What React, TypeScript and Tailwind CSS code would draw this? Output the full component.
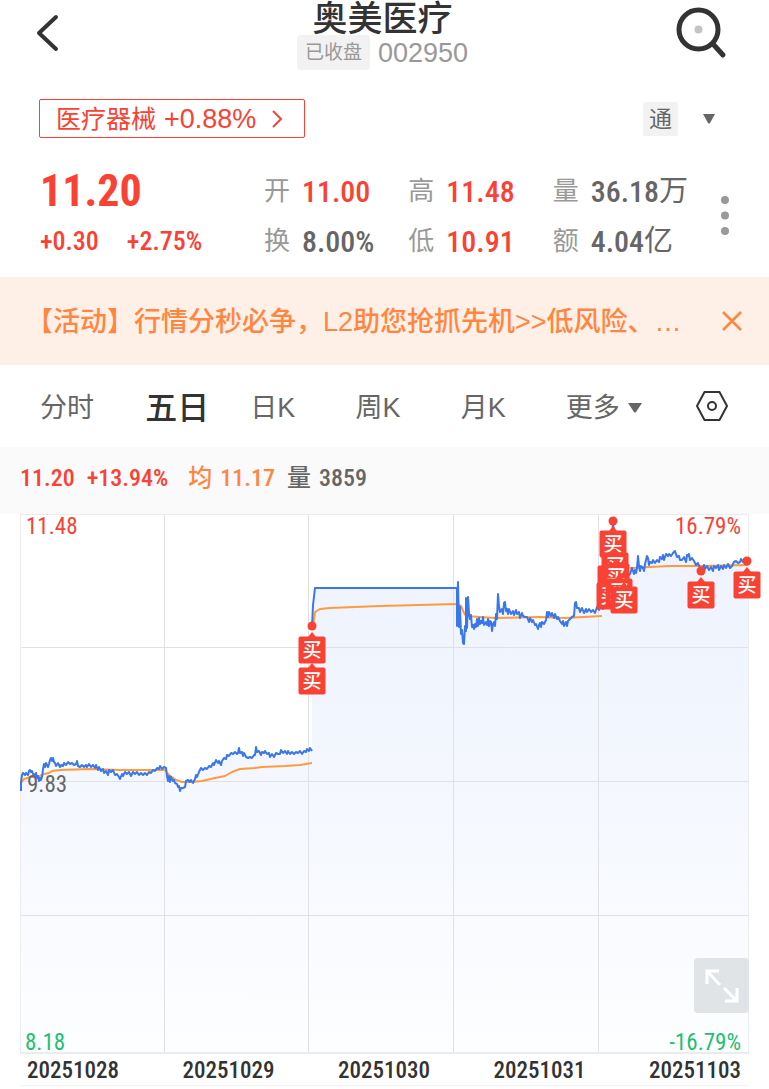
import { useState } from 'react'

const RED = '#f94234'

const quotes = [
  { label: '开', value: '11.00', up: true },
  { label: '高', value: '11.48', up: true },
  { label: '量', value: '36.18', unit: '万' },
  { label: '换', value: '8.00%' },
  { label: '低', value: '10.91', up: true },
  { label: '额', value: '4.04', unit: '亿' },
]

const tabs = ['分时', '五日', '日K', '周K', '月K']

const dates = ['20251028', '20251029', '20251030', '20251031', '20251103']

// price line, split where the session gaps
const priceLeft =
  '21,791 21,782 22,775 23,773 25,775 26,773 28,775 29,771 30,770 31,772 32,771 33,774 35,775 36,773 37,778 38,776 39,781 40,778 41,780 42,777 43,769 44,764 45,767 46,763 47,765 48,767 49,764 50,760 51,758 52,761 53,758 54,762 55,763 56,766 58,763 60,767 61,765 63,766 64,763 66,765 68,762 70,764 72,763 74,765 76,764 77,761 78,766 80,767 82,765 84,767 86,765 87,767 89,764 91,767 93,765 95,768 96,765 98,770 99,767 101,771 103,769 104,773 106,771 108,775 109,770 111,772 113,770 115,775 117,774 119,777 120,779 122,774 123,776 125,772 127,774 129,772 131,776 133,772 135,774 137,772 139,775 141,773 143,775 145,773 147,775 149,772 151,773 153,770 155,771 157,768 159,769 160,766 162,769 164,767 166,768 167,776 168,781 169,776 170,782 171,777 173,781 174,780 175,783 177,784 178,787 179,786 180,791 181,788 183,788 185,787 186,781 188,780 190,782 191,780 193,783 195,779 196,775 197,777 199,772 201,768 203,770 205,768 207,769 209,766 211,767 213,763 214,765 216,760 218,763 219,761 221,765 222,761 224,758 226,759 227,755 229,756 231,753 233,754 235,752 237,754 238,753 239,748 240,753 242,752 243,756 244,753 246,757 248,758 250,757 252,758 254,755 255,755 256,747 257,752 259,751 261,755 262,752 264,753 265,751 267,754 269,753 270,757 272,754 274,757 276,753 278,754 280,754 281,750 283,753 285,751 287,754 288,751 290,754 292,752 294,754 296,752 298,753 300,751 302,754 304,751 306,752 307,749 309,751 310,748 312,751'
const priceRight =
  '312,626 313,605 315,588 457,588 457,626 458,582 459,627 460,607 461,634 462,630 463,643 464,644 465,626 466,631 466,598 467,628 468,597 469,613 470,619 471,615 472,627 473,625 474,629 475,624 476,627 477,619 478,626 479,618 480,624 481,621 482,623 483,617 484,625 486,622 487,625 488,619 489,626 490,621 491,622 492,631 493,624 494,622 495,626 496,614 497,619 498,594 499,606 500,612 502,609 503,614 504,603 505,602 506,611 507,609 508,614 509,609 511,614 513,611 514,615 516,610 517,614 519,612 520,618 522,613 523,616 525,617 527,617 529,622 530,618 532,622 533,620 535,625 536,624 538,629 539,625 540,623 541,627 542,622 544,624 546,620 547,612 548,617 549,612 551,616 552,613 554,618 555,614 557,619 558,617 560,621 562,624 563,621 564,626 566,622 567,626 568,621 570,619 572,617 574,616 575,603 576,602 577,608 579,608 580,612 582,608 584,613 586,609 587,612 589,609 591,612 593,610 595,613 597,607 599,610 601,606 603,609 604,600 611,560 613,521 616,560 624,582 630,574 632,568 634,574 635,570 636,573 637,568 638,556 639,566 640,571 641,566 643,568 644,571 645,564 647,556 648,558 649,565 650,562 652,563 653,560 655,563 657,560 659,562 660,557 662,559 663,555 664,560 666,554 668,556 669,554 671,556 673,553 675,551 676,554 677,557 679,556 680,560 682,560 684,557 686,562 687,555 688,556 689,554 690,560 692,558 694,561 696,565 698,563 700,568 702,569 704,565 705,569 707,566 709,570 711,567 713,571 714,566 716,568 718,565 719,570 721,566 723,569 724,565 726,568 728,564 730,568 732,566 734,562 736,561 738,563 740,562 741,559 743,562 744,559 746,562 748,561'

const avgLeft =
  '21,783 24,779 30,777 38,777 44,774 49,773 52,771 60,770 90,769 120,770 165,770 169,775 176,780 182,782 192,782 202,781 215,778 225,776 232,772 240,769 255,768 262,767 285,766 300,765 312,763'
const avgRight = '313,626 315,612 320,609 330,608 380,606 457,604 461,606 464,613 466,616 480,617 495,618 540,617 565,618 602,616'
const avgLast = '630,568 670,566 700,566 748,565'

// later entries are painted over earlier ones
const buys = [
  { x: 613, y: 544 },
  { x: 615, y: 566 },
  { x: 611, y: 579, blank: true },
  { x: 616, y: 577 },
  { x: 610, y: 596 },
  { x: 619, y: 592 },
  { x: 624, y: 600 },
  { x: 312, y: 650 },
  { x: 312, y: 681 },
  { x: 701, y: 595 },
  { x: 747, y: 585 },
]

function Chart() {
  return (
    <svg viewBox="0 514 769 541" className="block w-full overflow-visible" role="img" aria-label="五日">
      <defs>
        <linearGradient id="area" x1="0" y1="550" x2="0" y2="1053" gradientUnits="userSpaceOnUse">
          <stop offset="0" stopColor="#eef3fe" />
          <stop offset="0.45" stopColor="#f4f7fe" />
          <stop offset="1" stopColor="#fdfeff" />
        </linearGradient>
      </defs>
      <polygon points={`${priceLeft} 312,1053 21,1053`} fill="url(#area)" />
      <polygon points={`${priceRight} 748,1053 312,1053`} fill="url(#area)" />

      <g stroke="#dfe1e6" strokeWidth="1">
        <path d="M20 647.5H748M20 781.5H748M20 915.5H748" />
        <path d="M164.5 514V1053M308.5 514V1053M453.5 514V1053M598.5 514V1053" />
        <path d="M20.5 514V1053M748.5 514V1053M20 514.5H748" stroke="#ececef" />
        <path d="M20 1053H749" stroke="#ececec" strokeWidth="2" />
      </g>

      <g fill="none" strokeWidth="2" strokeLinejoin="round">
        <g stroke="#ff9a3d">
          <polyline points={avgLeft} />
          <polyline points={avgRight} />
          <polyline points={avgLast} />
        </g>
        <g stroke="#3a76ec">
          <polyline points={priceLeft} />
          <polyline points={priceRight} />
        </g>
      </g>

      <g fontFamily="'Roboto Condensed', Roboto, sans-serif" fontSize="23" fontWeight="400">
        <text x="26" y="534" fill={RED}>11.48</text>
        <text x="741" y="534" fill={RED} textAnchor="end">16.79%</text>
        <text x="27" y="792" fill="#666">9.83</text>
        <text x="25" y="1050" fill="#1fbf73">8.18</text>
        <text x="741" y="1050" fill="#1fbf73" textAnchor="end">-16.79%</text>
      </g>

      <g fill={RED}>
        <circle cx="312" cy="626" r="4.5" />
        <circle cx="613" cy="521" r="4.5" />
        <circle cx="701" cy="571" r="4.5" />
        <circle cx="747" cy="561" r="4.5" />
      </g>
      {buys.map(({ x, y, blank }) => (
        <g key={`${x}-${y}`}>
          <path d={`M${x - 4} ${y - 13}L${x} ${y - 18}L${x + 4} ${y - 13}Z`} fill={RED} />
          <rect x={x - 13.5} y={y - 13.5} width="27" height="27" rx="2" fill={RED} />
          {!blank && (
            <text
              x={x}
              y={y + 7}
              fill="#fff"
              fontSize="19"
              fontWeight="500"
              textAnchor="middle"
              fontFamily="'Noto Sans CJK SC', sans-serif"
            >
              买
            </text>
          )}
        </g>
      ))}
    </svg>
  )
}

export default function App() {
  const [tab, setTab] = useState('五日')
  const [showNotice, setShowNotice] = useState(true)

  return (
    <div className="min-h-screen bg-white font-['Liberation_Sans','Noto_Sans_CJK_SC',sans-serif] text-[#666]">
      <header className="flex items-start justify-between pl-9 pr-10">
        <button aria-label="返回" className="mt-3">
          <svg width="56" height="42" viewBox="0 0 56 42" fill="none" stroke="#333" strokeWidth="4" strokeLinecap="round" strokeLinejoin="round">
            <path d="M20 5L3 21L20 37" />
          </svg>
        </button>
        <div className="flex flex-col items-center pt-[2px]">
          <h1 className="text-[35px] leading-[33px] font-medium text-[#333]">奥美医疗</h1>
          <div className="flex items-center gap-2">
            <span className="flex h-[35px] items-center rounded bg-[#f2f2f2] px-2 pt-[2px] text-[19px] text-[#999]">已收盘</span>
            <span className="pt-[2px] text-[27px] leading-[33px] text-[#999]">002950</span>
          </div>
        </div>
        <button aria-label="搜索" className="mt-[6px]">
          <svg width="56" height="54" viewBox="0 0 56 54" fill="none">
            <circle cx="25.500" cy="23.500" r="19.500" stroke="#333" strokeWidth="5" />
            <path d="M40 38L50 49" stroke="#333" strokeWidth="5" strokeLinecap="round" />
            <circle cx="25.500" cy="23.500" r="4" fill="#c4c4c4" />
          </svg>
        </button>
      </header>

      <div className="mt-[29px] flex items-center justify-between pl-[39px] pr-[53px]">
        <a href="#sector" className="flex h-[39px] items-center gap-2 rounded-xs border border-current px-4 text-[#f94234]">
          <span className="pt-[2px] text-[25px]">医疗器械</span>
          <span className="pt-[2px] text-[27px]">+0.88%</span>
          <svg width="24" height="20" viewBox="0 0 24 20" fill="none" stroke="currentColor" strokeWidth="2">
            <path d="M9 2L17 10L9 18" />
          </svg>
        </a>
        <button className="flex items-center gap-6" aria-label="通">
          <span className="flex h-[34px] w-[35px] items-center justify-center rounded-xs bg-[#f2f2f2] pt-[2px] text-[23px]">通</span>
          <svg width="14" height="10" viewBox="0 0 14 10" fill="#666">
            <path d="M1 0H13L8 9Q7 10 6 9Z" />
          </svg>
        </button>
      </div>

      <section className="flex items-center pt-7 pb-[11px] pl-10 pr-9">
        <div className="w-[224px] font-['Roboto_Condensed',Roboto,sans-serif] text-[#f94234]">
          <div className="text-[44px] leading-[50px] font-bold">11.20</div>
          <div className="flex gap-7 text-[26px] leading-[50px] font-medium">
            <span>+0.30</span>
            <span>+2.75%</span>
          </div>
        </div>
        <dl className="grid flex-1 grid-cols-3">
          {quotes.map((q) => (
            <div key={q.label} className="flex h-[50px] items-center gap-3 whitespace-nowrap">
              <dt className="text-[26px] leading-[50px] text-[#999]">{q.label}</dt>
              <dd className={q.up ? 'flex items-center text-[#f94234]' : 'flex items-center text-[#666]'}>
                <span className="font-['Roboto_Condensed',Roboto,sans-serif] text-[30px] font-medium">{q.value}</span>
                {q.unit && <span className="pt-[2px] text-[29px]">{q.unit}</span>}
              </dd>
            </div>
          ))}
        </dl>
        <button aria-label="更多行情" className="ml-5">
          <svg width="16" height="40" viewBox="0 0 16 40" fill="#999">
            <circle cx="8" cy="4" r="4" />
            <circle cx="8" cy="19.500" r="4" />
            <circle cx="8" cy="35" r="4" />
          </svg>
        </button>
      </section>

      {showNotice && (
        <div className="flex h-[88px] items-center justify-between gap-6 bg-[#fff0e7] px-[26px] text-[#ff8640]">
          <p className="truncate pt-[2px] text-[27px] font-medium">【活动】行情分秒必争，L2助您抢抓先机&gt;&gt;低风险、…</p>
          <button aria-label="关闭" onClick={() => setShowNotice(false)}>
            <svg width="22" height="22" viewBox="0 0 22 22" fill="none" stroke="currentColor" strokeWidth="2.500">
              <path d="M2 2L20 20M20 2L2 20" />
            </svg>
          </button>
        </div>
      )}

      <nav className="flex h-[82px] items-center gap-6 px-10 text-[27px]">
        <div className="grid flex-1 grid-cols-6 items-center justify-items-start pt-[3px]">
          {tabs.map((t) => (
            <button
              key={t}
              onClick={() => setTab(t)}
              className={t === tab ? 'text-[32px] leading-10 font-medium text-[#333]' : 'leading-10'}
            >
              {t}
            </button>
          ))}
          <button className="flex items-center gap-2 leading-10">
            更多
            <svg width="14" height="10" viewBox="0 0 14 10" fill="#666">
              <path d="M0 0H14L8 9Q7 10 6 9Z" />
            </svg>
          </button>
        </div>
        <button aria-label="设置">
          <svg width="34" height="32" viewBox="0 0 34 32" fill="none" stroke="#333" strokeWidth="2" strokeLinejoin="round">
            <path d="M9.500 2H24.500L32 16L24.500 30H9.500L2 16Z" />
            <circle cx="17" cy="16" r="4" />
          </svg>
        </button>
      </nav>

      <div className="flex h-[67px] items-center bg-[#fafafa] px-5 pb-[5px] text-[24px]">
        <div className="flex items-center gap-3 font-['Roboto_Condensed',Roboto,'Noto_Sans_CJK_SC',sans-serif] font-medium">
          <span className="text-[#f94234]">11.20</span>
          <span className="text-[#f94234]">+13.94%</span>
          <span className="ml-2 flex gap-2 text-[#ff8640]">
            <span>均</span>
            <span>11.17</span>
          </span>
          <span className="flex gap-2">
            <span>量</span>
            <span>3859</span>
          </span>
        </div>
      </div>

      <Chart />

      {/* fullscreen toggle sits over the chart's lower right corner */}
      <div className="relative">
        <button
          aria-label="全屏"
          className="absolute right-5 bottom-full mb-[42px] flex size-[55px] items-center justify-center rounded bg-[#e1e4e6]"
        >
          <svg width="36" height="36" viewBox="0 0 36 36" fill="none" stroke="#fff" strokeWidth="3">
            <path d="M3 16V3H15M3 3L16 17M20 20L33 33M33 20V33H21" />
          </svg>
        </button>
      </div>

      <div className="mx-5 flex justify-between border-b border-[#f3f3f3] pr-2 pl-[7px] pt-px font-['Roboto_Condensed',Roboto,sans-serif] text-[23px] leading-[29px] font-medium text-[#333]">
        {dates.map((d) => (
          <span key={d}>{d}</span>
        ))}
      </div>
    </div>
  )
}
